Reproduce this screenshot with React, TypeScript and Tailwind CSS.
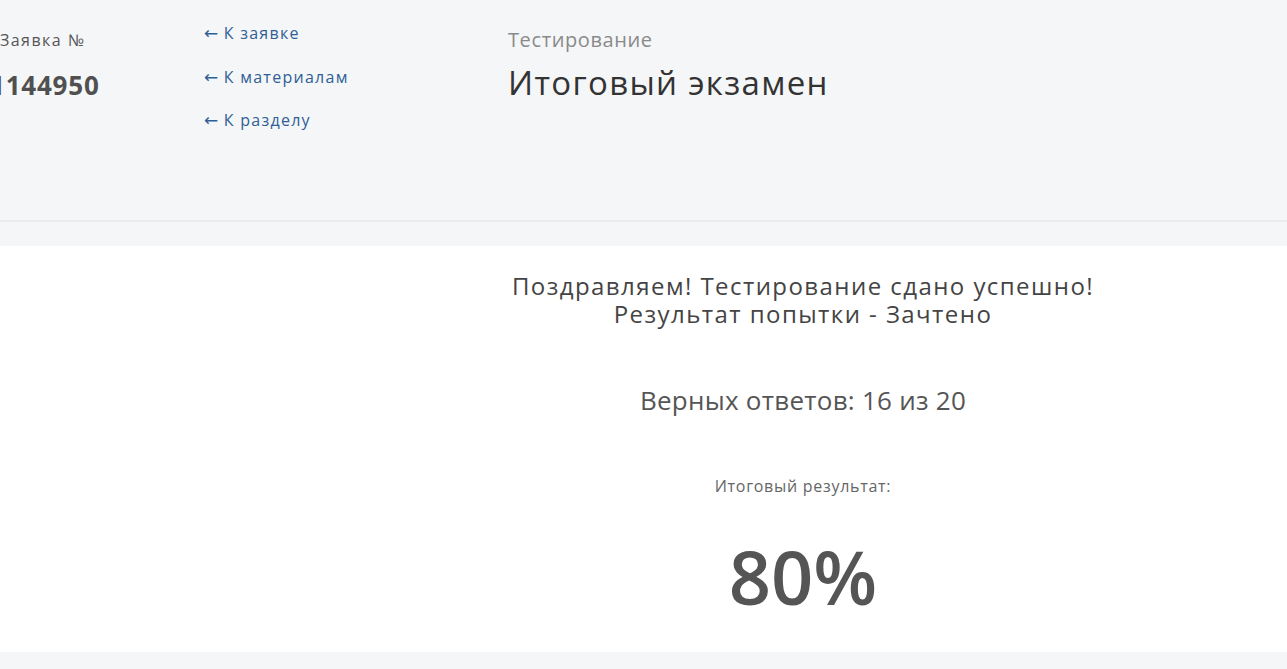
function BackLink({ children }: { children: string }) {
  return (
    <a href="#" className="text-[16px] leading-[24px] tracking-[0.08em] text-[#2e6096]">
      <span className="font-['DejaVu_Sans',sans-serif] text-[17px] tracking-normal">←</span> {children}
    </a>
  );
}

export default function App() {
  return (
    <div className="min-h-screen bg-[#f5f6f8] font-['Open_Sans',sans-serif] text-[#4a4a4a]">
      {/* Header */}
      <header className="h-[222px] border-b-2 border-[#e9ebef] bg-[#f5f6f8]">
        <div className="flex">
          <div className="w-[204px] shrink-0 pt-[28px]">
            <div className="text-[16px] leading-[24px] tracking-[0.09em] text-[#555]">Заявка №</div>
            <div className="-ml-[10px] mt-[17px] text-[26px] font-bold leading-[32px] tracking-[0.03em] text-[#505050]">1144950</div>
          </div>
          <nav className="w-[304px] shrink-0 pt-[21px] flex flex-col gap-[19.5px]">
            <BackLink>К заявке</BackLink>
            <BackLink>К материалам</BackLink>
            <BackLink>К разделу</BackLink>
          </nav>
          <div className="pt-[26px]">
            <div className="text-[20px] leading-[28px] tracking-[0.03em] text-[#8a8a8a]">Тестирование</div>
            <h1 className="mt-[8px] text-[33px] leading-[42px] tracking-[0.04em] text-[#333]">Итоговый экзамен</h1>
          </div>
        </div>
      </header>

      {/* Result */}
      <main className="mt-[24px] bg-white">
        <div className="ml-[508px] w-[590px] pt-[26px] pb-[35px] text-center">
          <p className="text-[24px] leading-[28px] tracking-[0.06em] text-[#444]">
            Поздравляем! Тестирование сдано успешно!
            <br />
            Результат попытки - Зачтено
          </p>
          <p className="mt-[56px] text-[26px] leading-[32px] tracking-[0.01em] text-[#555]">Верных ответов: 16 из 20</p>
          <p className="mt-[58px] text-[16px] leading-[24px] tracking-[0.045em] text-[#666]">Итоговый результат:</p>
          <p className="mt-[39px] text-[74px] font-semibold leading-[80px] text-[#555]">80%</p>
        </div>
      </main>
    </div>
  );
}
